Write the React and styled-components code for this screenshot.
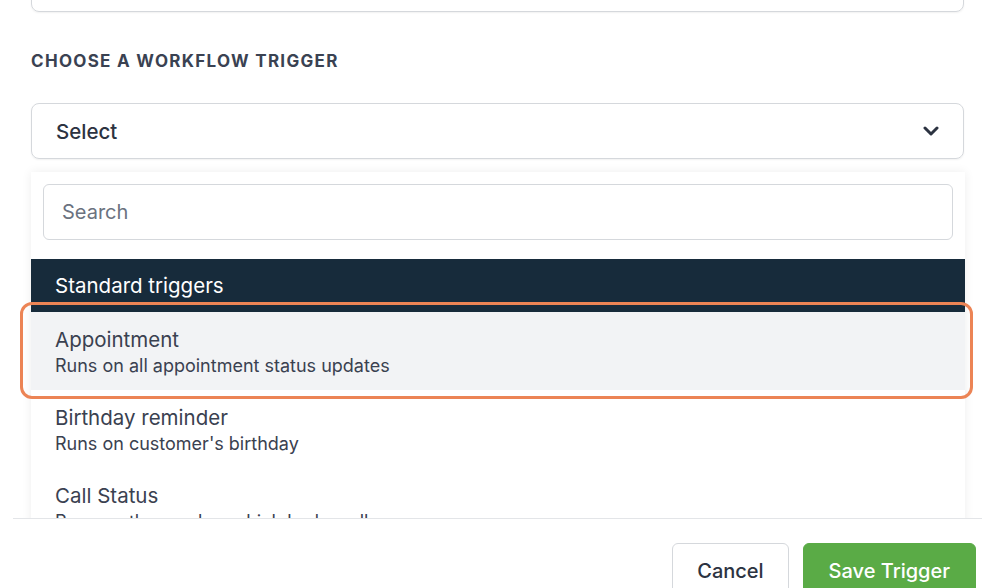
import React from "react";
import styled, { createGlobalStyle } from "styled-components";

const GlobalStyle = createGlobalStyle`
  html, body {
    margin: 0;
    padding: 0;
    background: #ffffff;
    font-family: Inter, "Liberation Sans", Arial, sans-serif;
    -webkit-font-smoothing: antialiased;
  }
  * { box-sizing: border-box; }
`;

const triggers = [
  { title: "Appointment", desc: "Runs on all appointment status updates", active: true },
  { title: "Birthday reminder", desc: "Runs on customer's birthday" },
  { title: "Call Status", desc: "Runs on the number which had a call" },
];

const App = () => {
  return (
    <Page>
      <GlobalStyle />
      <Body>
        <PrevField />
        <SectionLabel>Choose a workflow trigger</SectionLabel>
        <SelectBox>
          <span>Select</span>
          <Chevron viewBox="0 0 16 10" aria-hidden="true">
            <polyline points="2,2 8,8 14,2" />
          </Chevron>
        </SelectBox>
        <Dropdown>
          <SearchWrap>
            <SearchInput placeholder="Search" />
          </SearchWrap>
          <GroupHeader>Standard triggers</GroupHeader>
          {triggers.map((t) => (
            <Option key={t.title} $active={t.active}>
              <OptionTitle>{t.title}</OptionTitle>
              <OptionDesc>{t.desc}</OptionDesc>
            </Option>
          ))}
        </Dropdown>
      </Body>
      <Footer>
        <Button>Cancel</Button>
        <Button $primary>Save Trigger</Button>
      </Footer>
      <Highlight />
    </Page>
  );
};

export default App;

// Styled Components
const Page = styled.div`
  position: relative;
  width: 1002px;
  height: 588px;
  overflow: hidden;
  background: #fff;
`;

const Body = styled.div`
  height: 518px;
  overflow: hidden;
  padding: 0 38px 0 31px;
  display: flex;
  flex-direction: column;
`;

const PrevField = styled.div`
  flex: none;
  height: 56px;
  margin-top: -44px;
  border: 1px solid #d5d8dc;
  border-radius: 8px;
  box-shadow: 0 1px 2px rgba(0, 0, 0, 0.06);
`;

const SectionLabel = styled.div`
  margin-top: 39px;
  font-size: 17px;
  line-height: 20px;
  font-weight: 700;
  letter-spacing: 1.3px;
  text-transform: uppercase;
  color: #3a4252;
`;

const SelectBox = styled.div`
  flex: none;
  margin-top: 32px;
  height: 56px;
  border: 1px solid #d5d8dc;
  border-radius: 8px;
  box-shadow: 0 1px 2px rgba(0, 0, 0, 0.06);
  display: flex;
  align-items: center;
  justify-content: space-between;
  padding: 0 24px 0 24px;
  font-size: 20.5px;
  font-weight: 500;
  color: #2c3341;
`;

const Chevron = styled.svg`
  width: 16px;
  height: 10px;
  fill: none;
  stroke: #2c3341;
  stroke-width: 3;
  stroke-linecap: round;
  stroke-linejoin: round;
`;

const Dropdown = styled.div`
  flex: none;
  margin-top: 13px;
  margin-right: -1px;
  background: #fff;
  box-shadow: 0 0 10px rgba(0, 0, 0, 0.07);
  padding-top: 12px;
`;

const SearchWrap = styled.div`
  padding: 0 12px;
`;

const SearchInput = styled.input`
  display: block;
  width: 100%;
  height: 56px;
  border: 1px solid #d5d8dc;
  border-radius: 6px;
  padding: 0 18px;
  font-family: inherit;
  font-size: 20px;
  color: #374151;
  outline: none;

  &::placeholder {
    color: #6b7280;
  }
`;

const GroupHeader = styled.div`
  margin-top: 19px;
  height: 53px;
  display: flex;
  align-items: center;
  padding: 0 24px;
  background: #172b3b;
  color: #fff;
  font-size: 20.5px;
`;

const Option = styled.div`
  padding: 16px 24px 13px;
  background: ${(p) => (p.$active ? "#f2f3f5" : "#fff")};
  color: #3a4150;
`;

const OptionTitle = styled.div`
  font-size: 20.5px;
  line-height: 24px;
`;

const OptionDesc = styled.div`
  margin-top: 3px;
  font-size: 18px;
  line-height: 22px;
`;

const Footer = styled.div`
  margin: 0 20px 0 13px;
  border-top: 1px solid #e3e5e8;
  display: flex;
  justify-content: flex-end;
  gap: 14px;
  padding: 24px 6px 0 0;
`;

const Button = styled.button`
  flex: none;
  height: 56px;
  padding: 0 ${(p) => (p.$primary ? "25px" : "24px")};
  border-radius: 6px;
  border: 1px solid ${(p) => (p.$primary ? "#5aab46" : "#d5d8dc")};
  background: ${(p) => (p.$primary ? "#5aab46" : "#fff")};
  color: ${(p) => (p.$primary ? "#fff" : "#2c3341")};
  font-family: inherit;
  font-size: 20px;
  font-weight: 500;
  cursor: pointer;
`;

const Highlight = styled.div`
  position: absolute;
  left: 20px;
  top: 302px;
  width: 953px;
  height: 97px;
  border: 3px solid #ec8455;
  border-radius: 12px;
  pointer-events: none;
`;
